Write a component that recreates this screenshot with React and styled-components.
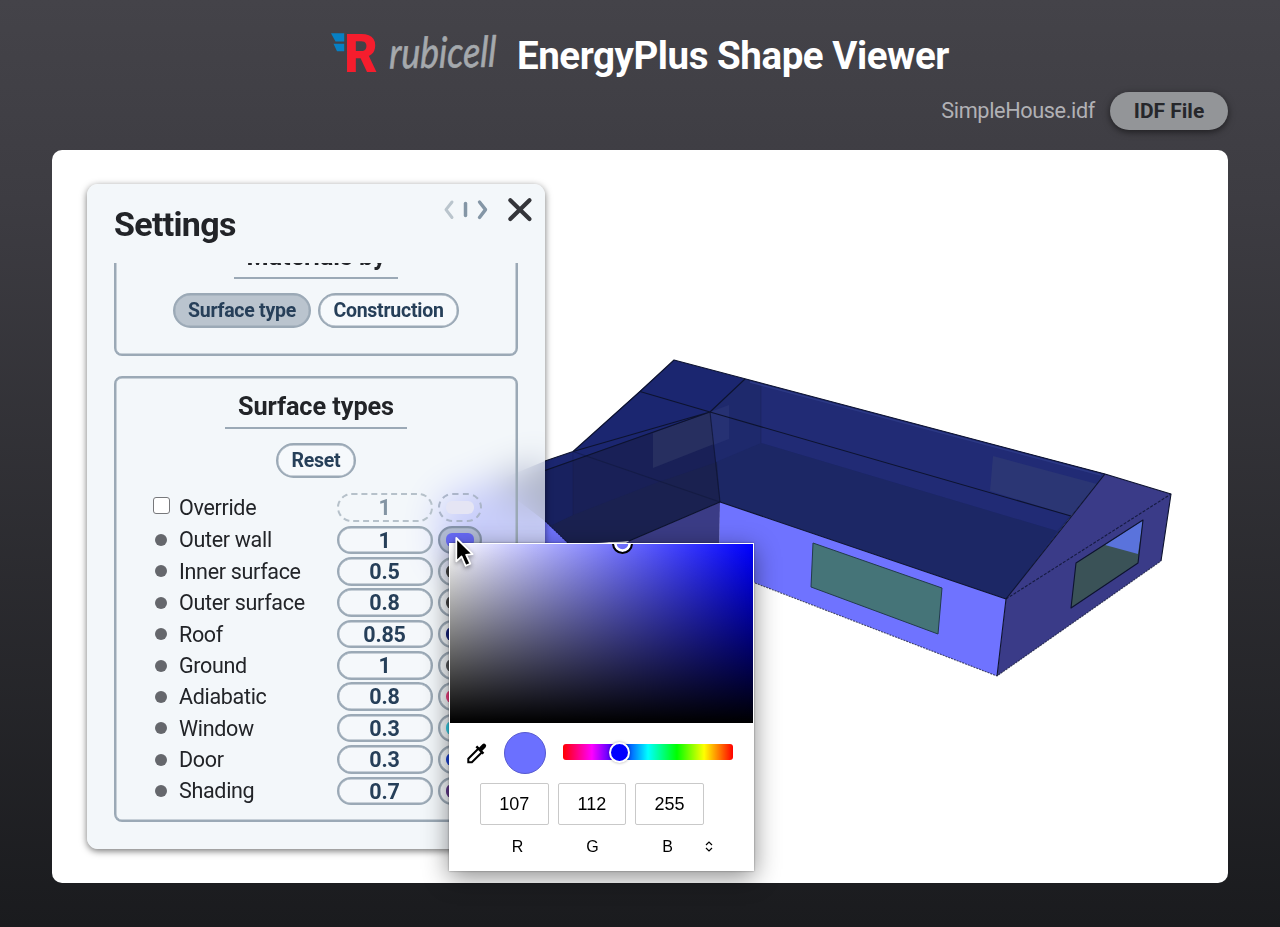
import React from "react";
import styled, { createGlobalStyle, css } from "styled-components";

const line = "#9ba9b6";
const ink = "#263f59";

const GlobalStyle = createGlobalStyle`
  * { box-sizing: border-box; }
  body { margin: 0; background: #1b1c1f; font-family: Roboto, "Liberation Sans", sans-serif; }
`;

const Page = styled.div`
  height: 927px;
  overflow: hidden;
  padding: 0 52px 44px;
  display: flex;
  flex-direction: column;
  background: linear-gradient(#444349 0, #3d3c42 200px, #1a1b1e 100%);
`;

const Header = styled.header`
  height: 92px;
  padding: 28px 0 0 279px;
  display: flex;
  align-items: flex-start;
  gap: 19px;
`;

const Logo = styled.svg`
  width: 167px;
  height: 52px;
  flex: none;
  overflow: visible;
`;

const Title = styled.h1`
  margin: 6px 0 0;
  font-size: 38.5px;
  line-height: 44px;
  font-weight: 700;
  letter-spacing: -0.45px;
  color: #fff;
  white-space: nowrap;
`;

const FileBar = styled.div`
  height: 58px;
  display: flex;
  align-items: flex-start;
  justify-content: flex-end;
  gap: 15px;
  font-size: 21.7px;
  letter-spacing: -0.38px;
  line-height: 38px;
  color: #b1b1b5;
`;

const FileButton = styled.button`
  width: 118px;
  height: 38px;
  padding: 0;
  border: 0;
  border-radius: 19px;
  background: #939598;
  color: #26272b;
  font: 700 21px/38px Roboto, sans-serif;
  box-shadow: 0 2px 7px rgba(0, 0, 0, 0.55);
`;

const Viewer = styled.main`
  position: relative;
  flex: 1;
  border-radius: 10px;
  background: #fff;
  padding: 34px 35px;
  overflow: hidden;
`;

const Scene = styled.svg`
  position: absolute;
  inset: 0;
  width: 1176px;
  height: 733px;
`;

const Panel = styled.section`
  position: relative;
  width: 458px;
  height: 665px;
  padding: 0 27px;
  border-radius: 11px;
  background: rgba(238, 244, 248, 0.7);
  backdrop-filter: blur(18px);
  box-shadow: 0 2px 7px rgba(0, 0, 0, 0.55);
`;

const PanelHead = styled.div`
  height: 79px;
  display: flex;
  justify-content: space-between;
`;

const PanelTitle = styled.h2`
  margin: 20px 0 0;
  font-size: 34px;
  letter-spacing: -0.7px;
  line-height: 40px;
  color: #222428;
`;

const PanelTools = styled.svg`
  width: 94px;
  height: 30px;
  margin: 11px -17px 0 0;
  fill: none;
  stroke-linecap: round;
  stroke-linejoin: round;
`;

const ScrollArea = styled.div`
  height: 586px;
  overflow: hidden;
`;

const Group = styled.section`
  height: ${(p) => p.$height}px;
  margin-top: ${(p) => p.$offset}px;
  border: 2px solid ${line};
  box-shadow: inset 0 0 0 0.5px ${line};
  border-radius: 8px;
  display: flex;
  flex-direction: column;
  align-items: center;
`;

const GroupTitle = styled.h3`
  margin: 0 0 14px;
  height: 51px;
  padding: 14px 12.5px 0;
  border-bottom: 2.5px solid ${line};
  font-size: 25.3px;
  letter-spacing: -0.08px;
  line-height: 30px;
  color: #222428;
`;

const ButtonRow = styled.div`
  display: flex;
  gap: 7px;
`;

const pill = css`
  border: 2px solid ${line};
  box-shadow: inset 0 0 0 0.4px ${line};
  color: ${ink};
  font-family: Roboto, sans-serif;
  font-weight: 700;
  padding: 0;
`;

const PillButton = styled.button`
  ${pill}
  width: ${(p) => p.$width}px;
  height: 35px;
  border-radius: 18px;
  font-size: 19.5px;
  letter-spacing: -0.26px;
  line-height: 31px;
  background: ${(p) => (p.$active ? "#bac4ce" : "#f6f9fc")};
`;

const Table = styled.div`
  width: 100%;
  margin-top: 15px;
  padding-left: 36px;
`;

const Row = styled.div`
  height: ${(p) => (p.$tall ? 32.7 : 31.37)}px;
  display: grid;
  grid-template-columns: 27px 157.5px 96px 44px;
  align-items: start;
`;

const Marker = styled.span`
  width: 12px;
  height: 12px;
  margin: 8.4px 0 0 3px;
  border-radius: 50%;
  background: #65676c;
`;

const Checkbox = styled.input`
  appearance: none;
  width: 17px;
  height: 17px;
  margin: 4px 0 0 0.5px;
  border: 1.5px solid #77787b;
  border-radius: 3px;
  background: #fff;
`;

const Label = styled.span`
  font-size: 21.5px;
  letter-spacing: -0.32px;
  line-height: 28px;
  margin-top: 0.8px;
  color: #222428;
  white-space: nowrap;
`;

const Value = styled.div`
  ${pill}
  height: 28.5px;
  border-radius: 15px;
  font-size: 21.5px;
  letter-spacing: -0.2px;
  line-height: 25.5px;
  text-align: center;
  ${(p) => !p.$off && "background: rgba(255,255,255,.2);"}
  ${(p) => p.$off && "border-style: dashed; border-color: #b6c1ca; box-shadow: none; color: #8394a3;"}
`;

const Swatch = styled.div`
  ${pill}
  width: 43.5px;
  height: 28.5px;
  margin-left: 5.5px;
  padding: 5.5px;
  border-radius: 15px;
  ${(p) => p.$pressed && "background: #b2bcd5; border-color: #8593aa;"}
  ${(p) => p.$off && "border-style: dashed; border-color: #abb5c9; box-shadow: none;"}
  &::before {
    content: "";
    display: block;
    height: 13.5px;
    border-radius: 6px;
    background: ${(p) => p.$color};
  }
`;

const Picker = styled.aside`
  position: absolute;
  left: 449px;
  top: 543px;
  width: 305px;
  height: 328px;
  padding: 1px;
  background: #fff;
  box-shadow: 0 6px 24px rgba(0, 0, 0, 0.46), 0 0 2px rgba(0, 0, 0, 0.4);
  font-family: "Liberation Sans", Arial, sans-serif;
  color: #000;
`;

const Spectrum = styled.div`
  position: relative;
  height: 179px;
  overflow: hidden;
  background: linear-gradient(transparent, #000), linear-gradient(90deg, #fff, #00f);
`;

const Ring = styled.div`
  position: absolute;
  left: 161.5px;
  top: -11.5px;
  width: 21px;
  height: 21px;
  border-radius: 50%;
  border: 2.5px solid #000;
  box-shadow: inset 0 0 0 2.7px #fff;
`;

const HueRow = styled.div`
  height: 60px;
  padding: 0 19px 0 16px;
  display: flex;
  align-items: center;
`;

const Dropper = styled.svg`
  width: 22px;
  height: 24px;
`;

const Preview = styled.div`
  width: 42px;
  height: 42px;
  margin-left: 16px;
  border: 1px solid #5659d0;
  border-radius: 50%;
  background: #6b70ff;
`;

const Hue = styled.div`
  width: 170px;
  height: 16px;
  margin: -2px 0 0 17.4px;
  padding-left: 45.6px;
  border-radius: 3px;
  background: linear-gradient(90deg, #f00, #f0f 17%, #00f 33%, #0ff 50%, #0f0 67%, #ff0 83%, #f00);
`;

const HueThumb = styled.div`
  width: 21px;
  height: 21px;
  margin-top: -2.5px;
  border: 2.5px solid #fff;
  border-radius: 50%;
  background: #00f;
  box-shadow: 0 0 3px rgba(0, 0, 0, 0.35);
`;

const Channels = styled.div`
  display: grid;
  grid-template-columns: repeat(3, 68.5px);
  column-gap: 9.1px;
  padding: 0 30px;
`;

const Channel = styled.div`
  height: 42px;
  border: 1.5px solid #c9c9c9;
  border-radius: 2px;
  font-size: 18px;
  line-height: 41px;
  text-align: center;
`;

const ChannelNames = styled.div`
  display: grid;
  grid-template-columns: repeat(3, 75px) 8px;
  padding: 12px 0 0 30px;
  font-size: 16px;
  line-height: 20px;
  text-align: center;
`;

const Chevrons = styled.svg`
  width: 8px;
  height: 11px;
  margin: 4px 0 0 -0.5px;
`;

const Cursor = styled.svg`
  position: absolute;
  left: 450px;
  top: 532px;
  width: 30px;
  height: 42px;
  filter: drop-shadow(0 2px 2px rgba(0, 0, 0, 0.4));
`;

const surfaces = [
  { name: "Outer wall", value: "1", color: "#686bf7", pressed: true },
  { name: "Inner surface", value: "0.5", color: "#444444" },
  { name: "Outer surface", value: "0.8", color: "#444444" },
  { name: "Roof", value: "0.85", color: "#17237c" },
  { name: "Ground", value: "1", color: "#55575a" },
  { name: "Adiabatic", value: "0.8", color: "#f04080" },
  { name: "Window", value: "0.3", color: "#38cfe8" },
  { name: "Door", value: "0.3", color: "#1c43d8" },
  { name: "Shading", value: "0.7", color: "#633a8c" },
];

function BrandLogo() {
  return (
    <Logo viewBox="331 28 167 52" aria-label="rubicell">
      <path fill="#0780c4" d="M331 33.3H344.2V41.6H335.5ZM333.5 43.8H344.2V51.3H337Z" />
      <text x="344.2" y="72" fontFamily="Roboto" fontSize="54.5" fontWeight="900" fill="#f51d2d" textLength="33.5" lengthAdjust="spacingAndGlyphs">R</text>
      <text transform="translate(389 68.5) rotate(-1) skewX(-2)" fontFamily="Lato" fontStyle="italic" fontSize="43" fill="#a5a9ad" stroke="#a5a9ad" strokeWidth="0.6" strokeLinejoin="round" textLength="107" lengthAdjust="spacingAndGlyphs">rubicell</text>
    </Logo>
  );
}

function House() {
  return (
    <Scene viewBox="52 150 1176 733">
      <polygon points="497,478 545,519 640,610 640,650 438,560 440,500" fill="#7074ff" />
      <polygon points="674,360 1105,474 1071,516 1006,599 720,502 629,541 569,544 545,521 494,482 545,461 573,451.5" fill="#1b2670" />
      <polygon points="745,379 1105,474 1071,516 1006,599 720,502 710,412" fill="#1e296c" />
      <polygon points="761,384 1105,474 1057,531 761,443" fill="#212b75" />
      <polygon points="761,443 1057,531 1006,599 720,502 716,462" fill="#1c2765" />
      <polygon points="494,482 545,470 710,412 720,502 629,541 569,544 545,521" fill="#192057" />
      <polygon points="573,515 653,484 717,462 720,502 629,541 569,544 552,525" fill="#1a2150" />
      <polygon points="545,471 573,461 573,515 552,525 545,520" fill="#18215f" />
      <polygon points="653,433 710,412 714,444 653,468" fill="#272f60" />
      <polygon points="710,412 729,405 729,439 713.5,445" fill="#263173" />
      <polygon points="993,456 1097,484 1071,516 990,491" fill="#2b3674" />
      <polygon points="720,502 629,541 600,560 719,600" fill="#3b3c86" />
      <polygon points="720,502 1006,599 997,676 719,569" fill="#6f73ff" />
      <polygon points="1105,474 1171,494 1161,561 997,676 1006,599" fill="#3a3b88" />
      <polygon points="813,543 942,588 938,634 811,587" fill="#457478" stroke="#223b4b" />
      <polygon points="1076,563 1143,520 1138,563 1071,608" fill="#3a5257" />
      <polygon points="1105,545 1143,520 1138,554" fill="#5a73dc" />
      <g fill="none" stroke="#0d132f" strokeWidth="1.1" strokeLinejoin="round">
        <path d="M545 461L573 451.5 640 391.5 674 360 1105 474 1171 494 1161 561M997 676L1006 599 1105 474" />
        <path d="M640 391.5L710 412 1071 516M710 412L745 379M573 451.5L710 412M545 470.5L710 412M629 541L720 502 1006 599" />
        <path d="M710 412L720 502" opacity=".7" />
        <path d="M573 451.5L720 502" opacity=".4" />
        <path d="M573 452V515M761 384V443" opacity=".15" />
        <path d="M545 521L569 544M755 583L997 676 1161 561" strokeDasharray="2 1" opacity=".7" />
        <path d="M1006 599L1171 494" strokeDasharray="3 1.5" opacity=".8" />
        <path d="M1076 563L1143 520 1138 563 1071 608Z" />
      </g>
      <path d="M750 382L1101 475" stroke="#2c3985" strokeWidth="1.5" />
    </Scene>
  );
}

function SettingsPanel() {
  return (
    <Panel>
      <PanelHead>
        <PanelTitle>Settings</PanelTitle>
        <PanelTools viewBox="441 195 94 30">
          <path d="M452 202L446 209.6 452 217.5" stroke="#bac5cd" strokeWidth="3" />
          <path d="M465.5 203.5V215.5" stroke="#8496a6" strokeWidth="3.5" />
          <path d="M479.5 202L485.5 209.6 479.5 217.5" stroke="#8496a6" strokeWidth="3.4" />
          <path d="M510.3 200.2L529.5 219M529.5 200.2L510.3 219" stroke="#34353a" strokeWidth="4.2" />
        </PanelTools>
      </PanelHead>
      <ScrollArea>
        <Group $height={130} $offset={-37}>
          <GroupTitle>Materials by</GroupTitle>
          <ButtonRow>
            <PillButton $width={138} $active>Surface type</PillButton>
            <PillButton $width={141}>Construction</PillButton>
          </ButtonRow>
        </Group>
        <Group $height={446} $offset={20}>
          <GroupTitle>Surface types</GroupTitle>
          <PillButton $width={80}>Reset</PillButton>
          <Table>
            <Row $tall>
              <Checkbox type="checkbox" aria-label="Override" />
              <Label>Override</Label>
              <Value $off>1</Value>
              <Swatch $off $color="#e5e5f4" />
            </Row>
            {surfaces.map((s) => (
              <Row key={s.name}>
                <Marker />
                <Label>{s.name}</Label>
                <Value>{s.value}</Value>
                <Swatch $color={s.color} $pressed={s.pressed} />
              </Row>
            ))}
          </Table>
        </Group>
      </ScrollArea>
    </Panel>
  );
}

function ColorPicker() {
  return (
    <Picker>
      <Spectrum><Ring /></Spectrum>
      <HueRow>
        <Dropper viewBox="466 741 22 24">
          <path d="M479 748L468.3 758.7V762.3H471.9L482.5 751.7" fill="#fff" stroke="#000" strokeWidth="2" />
          <path d="M475.5 747.3L477.2 745.6 479.2 747.6 482.4 744.3Q484 742.8 485.5 744.3T485.5 747.5L482.3 750.8 484.3 752.8 482.5 754.5Z" />
        </Dropper>
        <Preview />
        <Hue><HueThumb /></Hue>
      </HueRow>
      <Channels>
        <Channel>107</Channel>
        <Channel>112</Channel>
        <Channel>255</Channel>
      </Channels>
      <ChannelNames>
        <span>R</span><span>G</span><span>B</span>
        <Chevrons viewBox="0 0 8 11" fill="none" stroke="#000" strokeWidth="1.2"><path d="M1 4L4 1 7 4M1 7L4 10 7 7" /></Chevrons>
      </ChannelNames>
    </Picker>
  );
}

export default function App() {
  return (
    <Page>
      <GlobalStyle />
      <Header>
        <BrandLogo />
        <Title>EnergyPlus Shape Viewer</Title>
      </Header>
      <FileBar>
        <span>SimpleHouse.idf</span>
        <FileButton>IDF File</FileButton>
      </FileBar>
      <Viewer>
        <House />
        <SettingsPanel />
      </Viewer>
      <ColorPicker />
      <Cursor viewBox="450 532 30 42">
        <path d="M456.3 538L456.3 561.3 461.6 556.5 465.7 565.8 470.3 563.7 466.2 554.8 472.6 554.2Z" fill="#000" stroke="#fff" strokeWidth="1.8" strokeLinejoin="round" />
      </Cursor>
    </Page>
  );
}
